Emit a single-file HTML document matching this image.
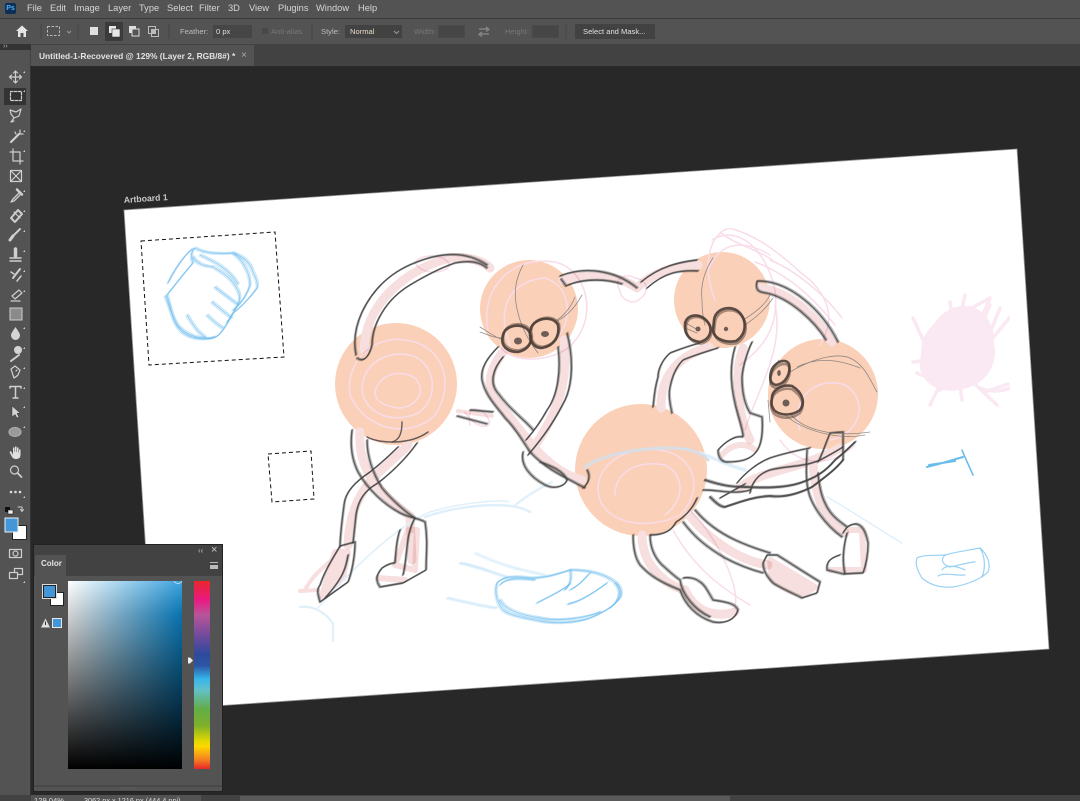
<!DOCTYPE html>
<html><head><meta charset="utf-8"><style>
html,body{margin:0;padding:0;background:#282828}
#r{position:relative;width:1080px;height:801px;overflow:hidden;background:#282828;font-family:"Liberation Sans",sans-serif;font-size:9.3px;color:#d6d6d6}
#r div{position:absolute}
.m{top:3px;white-space:nowrap}
.d{color:#777}
.o{top:26.500px;white-space:nowrap;font-size:7.600px}
.i{background:#464646;box-shadow:inset 0 0 0 1px #4a4a4a}
svg{position:absolute;left:0;top:0}
.p{fill:none;stroke:#f6dfde;stroke-linecap:round;stroke-linejoin:round;mix-blend-mode:multiply}
.s{fill:none;stroke:#f9dcea;stroke-width:1.500;stroke-linecap:round;mix-blend-mode:multiply}
.k{fill:none;stroke:#3f3f3f;stroke-width:1.400;stroke-opacity:.8;stroke-linecap:round;stroke-linejoin:round}
.t{fill:none;stroke:#777;stroke-width:.8;stroke-opacity:.8;stroke-linecap:round}
.e{fill:none;stroke:#4c3d36;stroke-width:2.600;stroke-opacity:.9}
.b{fill:none;stroke:#6fbeee;stroke-width:1.200;stroke-opacity:.7;stroke-linecap:round;stroke-linejoin:round}
.l{fill:none;stroke:#e0f0fb;stroke-width:2.200;stroke-linecap:round;stroke-linejoin:round}
</style></head><body><div id="r">

<svg width="1080" height="801" viewBox="0 0 1080 801">
<defs><filter id="f" x="0" y="0" width="100%" height="100%"><feGaussianBlur stdDeviation=".35"/></filter></defs>
<polygon points="124,210 1017,149 1049,649 156,710" fill="#fff"/>
<path d="M124 210L1017 149L1049 649L156 710Z" fill="none" stroke="#999" stroke-width=".8"/>
<text x="124" y="203" transform="rotate(-3.9 124 203)" font-family="Liberation Sans" font-size="8.700" font-weight="bold" fill="#c8c8c8">Artboard 1</text>

<circle cx="396" cy="384" r="61" fill="#fbd0b8"/>
<circle cx="529" cy="309" r="49" fill="#fbd0b8"/>
<circle cx="722" cy="300" r="48" fill="#fbd0b8"/>
<circle cx="823" cy="394" r="55" fill="#fbd0b8"/>
<circle cx="641" cy="470" r="66" fill="#fbd0b8"/>

<g filter="url(#f)">
<!-- pink construction scribbles -->
<g class="s">
<path d="M350 395C345 360 375 335 405 340C445 345 455 385 435 415C410 440 365 430 350 395Z"/>
<path d="M362 390C362 365 385 350 410 355C435 362 440 395 420 412C395 425 365 415 362 390Z"/>
<path d="M375 392C378 375 400 368 415 378C428 392 415 408 398 408C385 406 375 402 375 392Z"/>
<path d="M415 262C425 252 445 255 450 265C445 275 420 275 415 262Z"/>
<path d="M488 330C480 290 510 255 555 262C590 270 600 325 565 350C540 365 505 360 500 345"/>
<path d="M510 345C495 310 510 280 545 278C570 285 575 320 555 340"/>
<path d="M620 290C612 280 625 272 635 278C650 280 650 295 635 302C625 302 620 296 620 290Z"/>
<path d="M715 300C700 260 712 232 730 228C770 240 790 265 810 280C830 300 835 320 820 345"/>
<path d="M712 240C735 225 765 245 775 290C780 330 760 350 740 365"/>
<path d="M708 270C720 240 745 240 770 255M755 262C790 275 815 300 835 325"/>
<path d="M720 232C735 245 760 250 775 262M770 260C795 270 825 295 842 318"/>
<path d="M775 305C785 350 755 395 745 430"/>
<path d="M600 500C590 470 620 445 660 450C695 455 705 490 680 515C650 530 610 525 600 500Z"/>
<path d="M615 495C615 470 640 460 665 465C685 475 685 500 665 515"/>
<path d="M800 430C790 400 815 375 845 385C870 400 860 435 830 440"/>
<path d="M780 440C800 470 835 465 855 445"/>
<path d="M690 510C720 540 740 590 735 605"/>
<path d="M673 530C695 570 725 590 750 605"/>
<path d="M465 412C475 430 495 430 488 418C480 405 465 405 470 425"/>
</g>

<!-- pink limb bands -->
<g class="p" stroke-width="9">
<path d="M364 350C366 300 410 268 450 258C470 256 485 262 490 268"/>
<path d="M563 280C590 272 620 276 637 288C650 275 670 266 698 265"/>
<path d="M760 288C790 292 815 315 832 342"/>
<path d="M503 352C488 372 485 390 500 405C525 435 545 470 582 480"/>
<path d="M564 340C568 380 560 410 532 450"/>
<path d="M360 432C358 465 372 488 410 516L412 560"/>
<path d="M408 445C385 470 350 485 348 545"/>
<path d="M709 347C680 355 660 375 661 408"/>
<path d="M743 348C732 380 740 420 750 440"/>
<path d="M740 488C760 470 800 470 840 448"/>
<path d="M813 462C815 500 825 520 845 533"/>
<path d="M689 515C705 535 735 560 768 565"/>
<path d="M642 535C642 565 665 585 685 590C695 612 715 618 735 612"/>
</g>
<g class="p" stroke-width="6">
<path d="M458 411L492 416" stroke-width="4"/>
<path d="M395 565L415 570L417 530L408 530ZM378 578L405 580"/>
<path d="M335 552L348 552L343 578L322 596Z" fill="#f6dfde"/>
<path d="M850 530L862 530L864 570L830 570"/>
<path d="M770 560L815 587L803 595L772 580Z" fill="#f6dfde"/>
<path d="M722 455C735 440 750 445 755 450"/>
<path d="M305 590C315 570 330 565 340 550" stroke-width="4"/>
<path d="M300 591L318 590" stroke-width="4"/>
</g>

<!-- faint blue sweeps -->
<g class="l">
<path d="M318 608C360 560 400 525 430 512C470 500 510 500 508 502" stroke-width="1.500"/>
<path d="M425 517C460 505 510 500 530 512" stroke-width="2.500"/>
<path d="M514 506C525 497 540 488 552 482"/>
<path d="M300 607C315 605 328 615 333 624M333 624V642"/>
<path d="M700 453C715 458 725 465 745 470" stroke-width="3.500"/>
<path d="M827 497C850 510 880 530 902 543" stroke-width="1.500"/>
</g>
<path d="M585 467C610 450 660 446 685 449C695 451 705 455 708 460" fill="none" stroke="#d8dee6" stroke-width="3" stroke-linecap="round"/>

<!-- pencil lines -->
<g class="k" id="kk">
<path d="M356 355C353 340 356 325 362 312C375 285 395 270 417 262C440 253 465 250 487 265"/>
<path d="M357 358C362 362 368 360 372 345C372 325 385 300 410 285C425 276 440 268 455 263C470 260 480 262 487 268"/>
<path d="M560 276C585 266 615 270 637 288"/>
<path d="M561 279L566 286C585 277 610 280 622 284"/>
<path d="M641 282C660 266 680 262 697 260"/>
<path d="M647 288C665 272 680 270 698 271"/>
<path d="M758 281C790 281 822 310 838 342"/>
<path d="M757 281C755 290 758 292 766 293C790 298 815 322 826 340"/>
<path d="M498 347C488 357 480 368 482 380C485 395 495 405 505 418C515 428 522 440 530 452C545 468 560 475 585 488"/>
<path d="M503 357C492 370 490 383 497 392C510 410 525 420 533 430"/>
<path d="M567 333C574 360 572 385 565 400C555 420 545 435 528 455"/>
<path d="M558 347C561 370 558 395 547 410C540 423 533 432 526 440"/>
<path d="M470 410L493 412M457 416L487 424"/>
<path d="M523 452C520 465 530 477 545 485C555 490 565 486 567 480C563 470 548 465 540 462"/>
<path d="M583 488C590 482 590 475 587 470"/>
<path d="M352 430C350 445 352 460 358 472C368 490 385 505 400 513C410 518 418 518 425 522C428 540 426 555 426 570L403 583L380 587C375 580 376 575 382 568C388 564 392 563 395 563C396 545 398 535 400 530"/>
<path d="M367 440C367 455 372 472 382 488C390 498 405 512 415 518C405 535 408 555 403 575"/>
<path d="M398 447C385 460 375 468 370 472C355 482 345 492 344 505C342 520 340 535 340 547"/>
<path d="M417 443C405 460 392 472 378 483C365 490 358 500 356 515L353 543"/>
<path d="M340 546L355 542C355 555 352 572 348 582L320 602C318 595 316 590 320 585C325 570 333 558 340 546Z"/>
<path d="M348 555C346 568 343 578 325 598"/>
<path d="M700 343C685 347 678 350 670 353C660 362 658 372 658 377C654 390 654 400 653 407"/>
<path d="M718 348C705 352 695 355 683 360C675 368 672 378 670 387C668 395 670 405 672 413"/>
<path d="M735 347C728 370 732 395 738 415C741 425 743 432 743 437C735 435 725 442 718 450C718 458 722 462 727 462C740 462 750 460 756 452C762 445 763 430 762 417L750 413C745 405 742 392 742 377C743 365 748 350 752 342"/>
<path d="M737 483C745 473 757 463 770 458C785 453 800 450 810 448"/>
<path d="M750 493C752 482 758 474 770 470C785 466 805 467 820 460C830 455 838 450 843 447"/>
<path d="M705 480C720 485 730 487 745 487C765 488 785 488 800 483C815 478 825 472 835 460C845 452 850 447 855 442" stroke-width="1.900"/>
<path d="M710 497C715 502 720 507 725 507C740 502 752 497 770 496C785 498 800 493 812 487C825 477 835 470 843 460" stroke-width="1.900"/>
<path d="M703 490C720 490 735 495 750 490M720 498L745 484"/>
<path d="M830 433C825 445 822 455 818 462M830 433L843 432L843 460"/>
<path d="M807 450C806 470 806 480 808 490C811 505 825 525 842 537"/>
<path d="M818 473C819 485 821 495 825 503C830 515 840 522 847 527"/>
<path d="M843 533C846 528 848 525 855 524C862 524 866 532 868 543C868 555 866 565 863 573L843 574L827 570C826 562 830 558 840 555"/>
<path d="M847 533C843 548 842 562 845 574"/>
<path d="M683 522C695 538 708 548 725 558C740 566 752 570 763 573"/>
<path d="M695 510C705 522 718 532 735 540C748 546 760 550 770 553"/>
<path d="M767 555L777 555C790 563 805 573 820 582L817 593L802 598C792 593 780 588 773 583C765 575 763 568 763 563Z"/>
<path d="M633 535C633 548 635 558 640 565C650 576 660 582 680 590C685 605 697 617 713 622C725 624 735 620 738 610C735 603 725 602 713 600C708 592 705 585 700 582C695 578 688 577 683 578"/>
<path d="M650 535C650 548 655 558 662 565C670 572 675 577 680 580C682 595 695 610 710 617"/>
<path d="M650 535C665 535 672 530 676 522C683 518 692 510 697 498"/>
</g>
<use href="#kk" transform="translate(1 -.8)" opacity=".45"/>
<use href="#kk" transform="translate(-.8 .8)" opacity=".35"/>
<g class="k" stroke-width="2">
<path d="M367 437C380 444 410 445 428 432"/>
<path d="M402 422C402 432 400 440 392 442"/>
</g>
<g class="t">
<path d="M523 265C515 280 512 295 520 320C525 335 532 345 538 353"/>
<path d="M480 327C488 332 495 337 503 340M480 332C488 335 495 338 503 338"/>
<path d="M557 320C565 315 572 305 575 297M555 322C565 318 575 308 582 295"/>
<path d="M713 258C705 270 700 285 702 300C702 310 703 318 705 325"/>
<path d="M684 322L698 330M685 328L697 333"/>
<path d="M743 320C755 313 765 305 770 295M745 325C755 318 765 310 773 298"/>
<path d="M790 372C810 360 835 352 850 358C865 365 870 380 877 392"/>
<path d="M797 367C815 358 835 358 860 368"/>
<path d="M790 413C800 428 830 438 870 432M785 415C805 432 840 440 865 435"/>
<path d="M779 360C775 365 770 375 770 385M768 400L770 422"/>
</g>
<g class="e" id="ee">
<path d="M503 335C505 326 520 322 528 330C534 338 531 349 518 352C507 352 500 346 503 335Z"/>
<path d="M531 328C534 319 552 314 558 325C560 336 554 346 542 348C532 348 528 338 531 328Z"/>
<path d="M685 325C685 315 698 312 706 320C714 328 711 339 700 342C691 341 684 335 685 325Z"/>
<path d="M714 320C715 309 730 304 739 312C747 320 747 334 736 341C725 343 714 339 713 330Z"/>
<path d="M771 372C773 363 785 357 789 364C791 374 785 384 776 385C771 384 769 380 771 372Z"/>
<path d="M772 398C772 390 782 384 792 386C802 392 806 402 800 410C792 416 780 416 774 410C771 405 771 402 772 398Z"/>
</g>
<use href="#ee" transform="translate(.8 .6) rotate(1 640 340)" opacity=".55"/>
<g fill="#6f5d57">
<ellipse cx="518" cy="341" rx="4" ry="3.500"/><ellipse cx="545" cy="334" rx="4" ry="3"/>
<circle cx="698" cy="329" r="2.500"/><circle cx="726" cy="329" r="2.200"/>
<ellipse cx="779" cy="373" rx="1.800" ry="3"/><circle cx="786" cy="403" r="3.500"/>
</g>

<!-- blue studies -->
<g class="b" id="bb">
<path d="M167 295C175 285 185 272 193 263C190 255 192 250 195 248C205 254 222 254 233 253C242 256 250 262 253 272C257 280 258 285 257 288C250 298 240 308 233 313C228 322 225 328 222 331C218 337 212 340 205 338C195 338 185 333 178 326C172 318 170 305 167 295Z"/>
<path d="M165 296C172 310 172 322 182 332C192 340 205 340 215 337M168 283C175 268 185 255 192 249"/>
<path d="M193 257C198 265 205 266 213 267C222 272 230 278 234 284C240 292 241 298 238 304C235 310 232 316 227 322"/>
<path d="M200 255C215 262 228 268 238 284M233 253C245 262 250 275 250 285C247 295 240 305 233 310"/>
<path d="M215 287C222 293 232 300 237 304"/><path d="M212 302C218 307 225 313 232 318"/><path d="M207 315C212 320 218 325 223 328"/><path d="M187 315C192 323 197 332 205 337"/>
<path d="M497 583C503 576 515 576 530 578C545 578 555 575 570 570C585 570 600 572 612 580C620 585 623 592 620 598C615 605 605 612 590 618C575 623 555 624 540 621C525 618 510 616 503 610C497 603 494 592 497 583Z"/>
<path d="M500 585C505 578 520 578 535 580M500 600C505 610 520 615 540 618C560 622 585 618 600 612M615 583C622 590 620 600 610 608"/>
<path d="M537 603C550 596 560 592 570 584"/><path d="M568 604C580 602 595 592 607 583"/><path d="M570 590C580 585 585 578 590 573"/><path d="M570 570C572 578 570 585 565 590"/>
<path d="M460 563C480 567 490 572 507 577" stroke-opacity=".35"/><path d="M447 598C465 602 485 607 497 608" stroke-opacity=".3"/><path d="M475 553C500 565 520 570 545 575" stroke-opacity=".25"/>
</g>
<use href="#bb" transform="translate(1.200 -1)" opacity=".55"/>
<use href="#bb" transform="translate(-1.200 1)" opacity=".45"/>
<g class="b" stroke-opacity=".55">
<path d="M917 558C925 554 935 556 945 555C955 552 970 550 980 548C988 555 991 565 988 572C980 580 965 585 953 587C940 588 930 585 922 578C917 570 915 563 917 558Z"/>
<path d="M945 555C940 560 943 565 950 567C960 565 970 562 975 562M942 570C945 565 955 565 965 570M938 576C945 572 955 576 965 575M980 548C986 558 985 570 982 577"/>
</g>
<path d="M927 467C940 464 952 460 963 457M929 465L955 461" fill="none" stroke="#6bbcec" stroke-width="2" stroke-linecap="round"/>
<path d="M962 450C966 460 970 468 973 475" fill="none" stroke="#6bbcec" stroke-width="1.600" stroke-linecap="round"/>

<!-- pink blob -->
<g fill="none" stroke="#fae8f3" stroke-width="3.500" stroke-linecap="round" stroke-linejoin="round">
<path d="M913 318L930 355M965 295L955 340M950 302L955 335M968 310L990 298L972 340M990 305L970 350M1010 317L975 360M1000 308L985 345"/>
<path d="M913 362L945 358M917 373C925 378 935 375 945 365M930 405L945 375M940 390L950 380M962 400L958 370M997 405L960 370M1010 388C1000 392 990 392 980 388M985 392L1008 384"/>
</g>
<circle cx="958" cy="352" r="37" fill="#fae8f3"/>
<ellipse cx="960" cy="345" rx="33" ry="40" fill="#fae8f3" transform="rotate(20 960 345)"/>
<ellipse cx="955" cy="360" rx="36" ry="30" fill="#fae8f3" transform="rotate(-20 955 360)"/>
</g>

<!-- selection -->
<g fill="none" stroke="#fff" stroke-width="1"><path d="M141 241L275 232L284 357L149 365Z"/><path d="M268 454L311 451L314 499L272 502Z"/></g>
<g fill="none" stroke="#111" stroke-width="1" stroke-dasharray="4 3"><path d="M141 241L275 232L284 357L149 365Z"/><path d="M268 454L311 451L314 499L272 502Z"/></g>
</svg>

<!-- chrome -->
<div style="left:0;top:0;width:1080px;height:18px;background:#535353"></div>
<div style="left:0;top:18px;width:1080px;height:1px;background:#3c3c3c"></div>
<div style="left:0;top:19px;width:1080px;height:25px;background:#535353"></div>
<div style="left:0;top:44px;width:1080px;height:23px;background:#424242"></div>
<div style="left:0;top:44px;width:31px;height:6px;background:#333"></div>
<div style="left:31px;top:45px;width:223px;height:22px;background:#535353"></div>
<div style="left:30px;top:66px;width:1050px;height:1px;background:#2c2c2c"></div>
<div style="left:0;top:50px;width:30px;height:745px;background:#535353"></div>
<div style="left:30px;top:67px;width:1px;height:730px;background:#333"></div>
<div style="left:3px;top:43px;font-size:7px;color:#bbb">››</div>

<div style="left:5px;top:3px;width:11px;height:11px;background:#0d2f55;border-radius:2px;color:#4fb0ff;font-size:7px;font-weight:bold;line-height:11px;text-align:center">Ps</div>
<div class="m" style="left:27px">File</div><div class="m" style="left:50px">Edit</div><div class="m" style="left:74px">Image</div><div class="m" style="left:108px">Layer</div><div class="m" style="left:139px">Type</div><div class="m" style="left:167px">Select</div><div class="m" style="left:199px">Filter</div><div class="m" style="left:228px">3D</div><div class="m" style="left:249px">View</div><div class="m" style="left:278px">Plugins</div><div class="m" style="left:316px">Window</div><div class="m" style="left:358px">Help</div>

<div style="left:105px;top:22px;width:18px;height:19px;background:#3b3b3b"></div>
<div class="o" style="left:180px;color:#bdbdbd">Feather:</div>
<div style="left:213px;top:25px;width:39px;height:13px;background:#464646"></div>
<div class="o" style="left:216px;color:#ddd">0 px</div>
<div style="left:262px;top:28px;width:6px;height:6px;background:#484848"></div>
<div class="o d" style="left:271px">Anti-alias</div>
<div class="o" style="left:321px;color:#bdbdbd">Style:</div>
<div style="left:345px;top:25px;width:57px;height:13px;background:#424242"></div>
<div class="o" style="left:350px;color:#e8d8c8">Normal</div>
<div class="o d" style="left:414px">Width:</div>
<div class="i" style="left:438px;top:25px;width:27px;height:13px"></div>
<div class="o d" style="left:505px">Height:</div>
<div class="i" style="left:532px;top:25px;width:27px;height:13px"></div>
<div style="left:575px;top:24px;width:80px;height:15px;background:#424242"></div>
<div class="o" style="left:583px;color:#e0e0e0">Select and Mask...</div>
<div style="left:39px;top:51px;font-size:8.400px;font-weight:bold;color:#e2e2e2;white-space:nowrap">Untitled-1-Recovered @ 129% (Layer 2, RGB/8#) *</div>
<div style="left:241px;top:50px;font-size:10px;color:#aaa">×</div>

<svg width="1080" height="67" viewBox="0 0 1080 67">
<path d="M41 24V39M78 24V39M169 24V39M312 24V39M566 24V39" stroke="#444" stroke-width="1"/>
<path d="M16 31L22 25.500L28 31H26V37H23.500V33H20.500V37H18V31Z" fill="#e4e4e4"/>
<rect x="47.500" y="26.500" width="12" height="9" fill="none" stroke="#bbb" stroke-dasharray="2.500 1.500"/>
<path d="M67 31L69 33L71 31M394 31L396.500 33.500L399 31" fill="none" stroke="#999"/>
<rect x="90" y="27" width="8" height="8" fill="#e0e0e0"/>
<rect x="109" y="26" width="7" height="7" fill="#e8e8e8"/><rect x="112" y="29" width="8" height="8" fill="#e8e8e8" stroke="#3b3b3b" stroke-width=".6"/>
<rect x="129" y="26" width="7" height="7" fill="#ddd"/><rect x="132" y="29" width="7" height="7" fill="#535353" stroke="#ddd"/>
<rect x="148.500" y="26.500" width="7" height="7" fill="none" stroke="#bbb"/><rect x="151.500" y="29.500" width="7" height="7" fill="none" stroke="#bbb"/><rect x="151.500" y="29.500" width="4" height="4" fill="#bbb"/>
<path d="M479 29H488M486 27L489 29.500L486 31.500M489 34H480M482 32L479 34.500L482 36.500" fill="none" stroke="#8a8a8a" stroke-width="1.200"/>
</svg>

<!-- tools -->
<svg width="30" height="801" viewBox="0 0 30 801" style="z-index:3">
<rect x="4" y="88" width="22" height="17" fill="#333"/>
<g fill="none" stroke="#cfcfcf" stroke-width="1.200" stroke-linejoin="round" stroke-linecap="round">
<path d="M15.500 71V83M9.500 77H21.500M13.500 73L15.500 71L17.500 73M13.500 81L15.500 83L17.500 81M11.500 75L9.500 77L11.500 79M19.500 75L21.500 77L19.500 79"/>
<rect x="10.500" y="91.500" width="11" height="9" stroke-dasharray="2.500 1.500"/>
<path d="M10 110L16 112L21 109L19 116L14 118L11 114ZM14 118L11 122L14 121"/>
<path d="M11 142L19 134" stroke-width="2.200"/><path d="M20 130V133M23 134H20M15 132L16 134"/>
<path d="M13 149V161H23M10 152H20V164"/>
<rect x="10.500" y="170.500" width="11" height="11"/><path d="M10.500 170.500L21.500 181.500M21.500 170.500L10.500 181.500"/>
<path d="M19 193L13 199L11 202L14 201L20 195" stroke-width="1.300"/>
<path d="M17 189.500L22 194.500" stroke-width="2.500"/>
<path d="M11 218L18 210L22 214L15 222Z" stroke-width="2"/><path d="M14 212L20 218"/>
<path d="M20 229L13 236" stroke-width="2"/><path d="M13 236L10 240" stroke-width="3"/>
<path d="M10 258H21M10 261H21" stroke-width="1.500"/><path d="M15.500 249V256" stroke-width="3.500"/>
<path d="M20 269L13 278" stroke-width="2"/><path d="M11 272L14 274M17 281L21 276" stroke-width="1.500"/>
<path d="M19 290L12 296L15 299L22 293ZM11 301H20"/>
<path d="M14 378L11 369L15 366L20 370L18 375ZM14 378L17 376M16 371L17 370"/>
<path d="M10 388V386.500H21V388M15.500 387V398M13 398H18" stroke-width="1.500"/>
<ellipse cx="15" cy="432" rx="6" ry="4.500" fill="#9a9a9a" stroke="#aaa"/>
<circle cx="14.500" cy="470" r="4"/><path d="M17.500 473L21.500 477" stroke-width="1.800"/>
<rect x="9.500" y="549.500" width="12" height="8"/><circle cx="15.500" cy="553.500" r="2.500" stroke-dasharray="1 1"/>
<rect x="14.500" y="568.500" width="8" height="6"/><rect x="9.500" y="572.500" width="8" height="6" fill="#535353"/>
<path d="M18 507H22V511M20.500 509.500L22 511.500L23.500 509.500" stroke-width="1"/>
<path d="M19 355L11 361" stroke-width="2"/>
</g>
<path d="M15.500 327C18 331 20 333 20 335.500A4.500 4.500 0 0 1 11 335.500C11 333 13 331 15.500 327Z" fill="#d4d4d4"/>
<circle cx="18" cy="350" r="4" fill="#d4d4d4"/>
<rect x="10" y="308" width="12" height="12" fill="#8a8a8a" stroke="#ccc"/>
<path d="M12 406L12 417L15 414.500L17 418L19 417L17 413.500L20 413Z" fill="#d4d4d4" stroke="#333" stroke-width=".5"/>
<path d="M11 451L13 455V447.500H14.500V452H15V446.500H16.500V452H17V447.500H18.500V452.500H19V449.500H20.500V455C20.500 458 18.500 459 16 459C13.500 459 12.500 458 11 455L9.500 452Z" fill="#e0e0e0"/>
<circle cx="11" cy="492" r="1.300" fill="#ddd"/><circle cx="15.500" cy="492" r="1.300" fill="#ddd"/><circle cx="20" cy="492" r="1.300" fill="#ddd"/>
<rect x="5" y="507" width="5" height="5" fill="#111"/><rect x="8" y="510" width="5" height="4" fill="#eee" stroke="#111" stroke-width=".5"/>
<rect x="12.500" y="525.500" width="14" height="14" fill="#fff" stroke="#222"/>
<rect x="5" y="518" width="13" height="14" fill="#4396d8" stroke="#eee" stroke-width="1"/>
<g fill="#cfcfcf"><path d="M25 71L25 73L23 73Z M25 90L25 92L23 92Z M25 130L25 132L23 132Z M25 150L25 152L23 152Z M25 190L25 192L23 192Z M25 210L25 212L23 212Z M25 230L25 232L23 232Z M25 250L25 252L23 252Z M25 270L25 272L23 272Z M25 290L25 292L23 292Z M25 327L25 329L23 329Z M25 347L25 349L23 349Z M25 367L25 369L23 369Z M25 387L25 389L23 389Z M25 406L25 408L23 408Z M25 426L25 428L23 428Z M25 496L25 498L23 498Z M25 581L25 583L23 583Z"/></g>
</svg>

<!-- color panel -->
<div style="left:33px;top:544px;width:190px;height:248px;background:#222;z-index:4"></div>
<div style="left:34px;top:545px;width:188px;height:246px;background:#535353;z-index:4"></div>
<div style="left:34px;top:545px;width:188px;height:31px;background:#424242;z-index:4"></div>
<div style="left:35px;top:555px;width:31px;height:21px;background:#535353;z-index:4"></div>
<div style="left:41px;top:559px;font-size:8px;font-weight:bold;color:#e4e4e4;z-index:4">Color</div>
<div style="left:198px;top:546px;font-size:8px;color:#bbb;z-index:4">‹‹</div>
<div style="left:211px;top:544px;font-size:11px;color:#ccc;z-index:4">×</div>
<div style="left:210px;top:562px;width:8px;height:2px;border-top:1px solid #bbb;border-bottom:1px solid #bbb;box-shadow:0 3px 0 0 #bbb;z-index:4"></div>
<div style="left:50px;top:592px;width:14px;height:14px;background:#fff;border:1px solid #222;box-sizing:border-box;z-index:4"></div>
<div style="left:42px;top:584px;width:15px;height:15px;background:#4396d8;border:1px solid #ddd;outline:1px solid #222;outline-offset:-2px;box-sizing:border-box;z-index:4"></div>
<div style="left:52px;top:618px;width:10px;height:10px;background:#4396d8;border:1px solid #e8e8e8;box-sizing:border-box;z-index:4"></div>
<svg width="1080" height="801" viewBox="0 0 1080 801" style="z-index:5;pointer-events:none">
<path d="M45.500 618.500L50 627.500H41Z" fill="#ddd"/><path d="M45.500 621.500V625" stroke="#333"/>
<path d="M174 581A4.500 4.500 0 0 0 182 581" fill="none" stroke="#cfe8f8" stroke-width=".8"/>
<path d="M188 657.500H190L193 660.500L190 663.500H188Z" fill="#eee"/>
<path d="M34 786H222" stroke="#3d3d3d"/>
<path d="M120 788H135" stroke="#6a6a6a" stroke-dasharray="1 1"/>
</svg>
<div style="left:68px;top:581px;width:114px;height:188px;background:linear-gradient(to top,#000,rgba(0,0,0,0)),linear-gradient(to bottom,rgba(255,255,255,.22),rgba(255,255,255,0) 18%),linear-gradient(to right,#fff,#0a8bd4);z-index:4"></div>
<div style="left:194px;top:581px;width:16px;height:188px;z-index:4;background:linear-gradient(to bottom,#e8262a 0%,#e91a80 10%,#b8559a 18%,#6a4a9c 30%,#2e4a9c 39%,#2e55a5 45%,#35b5ea 52%,#63c0c8 58%,#62ad48 68%,#7fb02a 77%,#e0d800 85%,#fdd800 88%,#f58020 95%,#e8262a 100%)"></div>

<!-- status bar -->
<div style="left:0;top:795px;width:1080px;height:6px;background:#424242;z-index:2"></div>
<div style="left:31px;top:795px;width:170px;height:6px;background:#535353;z-index:2"></div>
<div style="left:240px;top:796px;width:490px;height:5px;background:#5a5a5a;z-index:2"></div>
<div style="left:34px;top:795px;font-size:7.600px;color:#ddd;z-index:3;line-height:12px;height:6px;overflow:hidden">129.04%</div>
<div style="left:84px;top:795px;font-size:7.300px;color:#ddd;z-index:3;line-height:12px;height:6px;overflow:hidden;white-space:nowrap">3062 px x 1216 px (444.4 ppi)</div>
</div></body></html>
